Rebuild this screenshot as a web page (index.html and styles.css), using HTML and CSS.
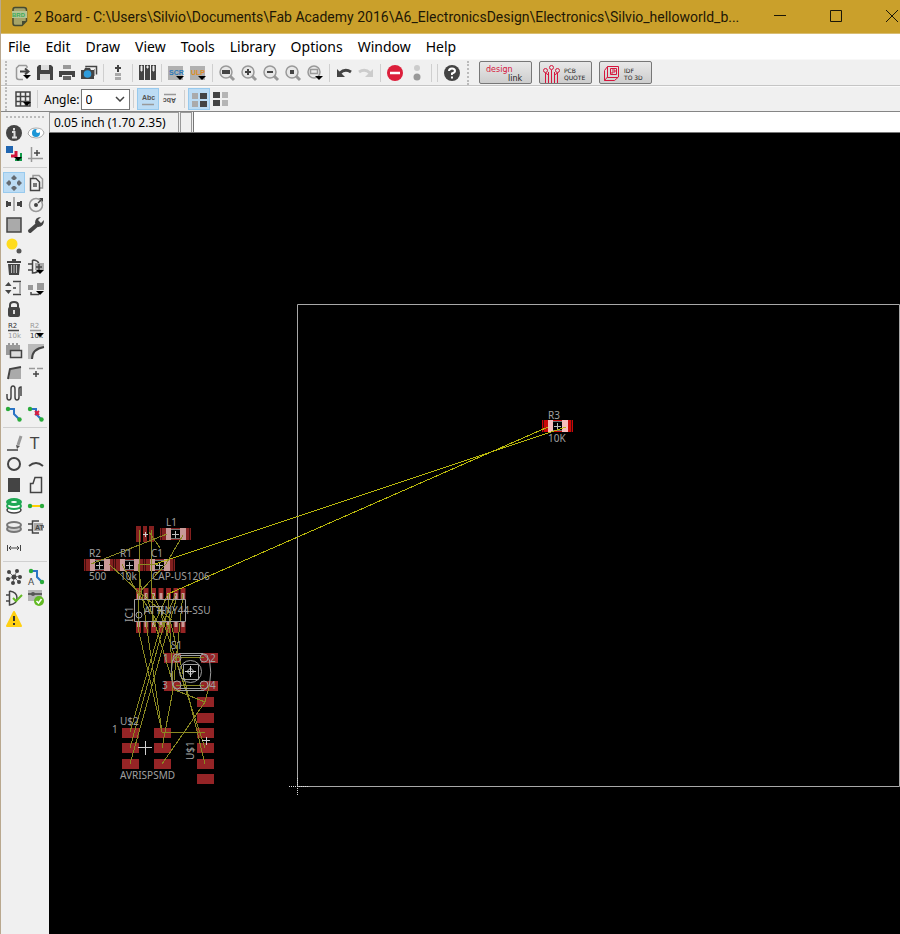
FILE: index.html
```html
<!DOCTYPE html>
<html lang="en">
<head>
<meta charset="utf-8">
<title>2 Board</title>
<link rel="stylesheet" href="styles.css">
</head>
<body>
<div class="window">
  <header class="titlebar">
    <svg class="app-icon" width="18" height="22" viewBox="0 0 18 22"><path d="M4 1.500H13Q15.500 1.500 15.500 4V15L11 19.500H4Q2 19.500 2 17V4Q2 1.500 4 1.500Z" fill="#a6a468" stroke="#454a32" stroke-width="1.500"/><path d="M11 19.500V15H15.500Z" fill="#454a32"/><rect x="1" y="5" width="15" height="7" fill="#b4c495"/><text x="1" y="11" class="brd">BRD</text></svg>
    <h1>2 Board - C:\Users\Silvio\Documents\Fab Academy 2016\A6_ElectronicsDesign\Electronics\Silvio_helloworld_b...</h1>
    <div class="window-buttons">
      <button aria-label="Minimize"><svg width="14" height="14" viewBox="0 0 14 14"><path d="M1 6.500H13" class="wb"/></svg></button>
      <button aria-label="Maximize"><svg width="14" height="14" viewBox="0 0 14 14"><path d="M1.500 1.500H12.500V12.500H1.500Z" class="wb"/></svg></button>
      <button aria-label="Close"><svg width="14" height="14" viewBox="0 0 14 14"><path d="M1 1L13 13M13 1L1 13" class="wb"/></svg></button>
    </div>
  </header>
  <nav class="menubar">
    <button>File</button><button>Edit</button><button>Draw</button><button>View</button><button>Tools</button><button>Library</button><button>Options</button><button>Window</button><button>Help</button>
  </nav>

  <div class="toolbar main-tools">
    <i class="grip"></i>
    <button aria-label="Open"><svg viewBox="0 0 18 18"><path d="M13 4V2.500L12 1.500H5L2.500 4V13Q2.500 15.500 5 15.500H9" class="g"/><path d="M6 7.500H14M11 4.500L14.500 7.500L11 10.500" class="d w2"/><path d="M9 11H17L13 15Z"/></svg></button>
    <button aria-label="Save"><svg viewBox="0 0 18 18"><path d="M3 1H15L17 3V16H1V3Z" fill="#444"/><path d="M5 1H13V6H5ZM4 10H14V16H4Z" fill="#ddd"/><path d="M1 8H17" class="d"/></svg></button>
    <button aria-label="Print"><svg viewBox="0 0 18 18"><path d="M5 2H13M5 4H13" class="g w2"/><path d="M1 7H17V13H14V11H4V13H1Z" fill="#444"/><path d="M5 12H13V16H5Z" fill="#666"/></svg></button>
    <button aria-label="Export image"><svg viewBox="0 0 18 18"><path d="M6 3.500V2.500H16.500V10.500" class="d"/><path d="M1 6H4L5 4H10L11 6H14V15H1Z" fill="#444"/><path d="M14 5H15V12H14Z" fill="#999"/><circle cx="7.500" cy="10" r="3.800" fill="#2f9ddd"/></svg></button>
    <i class="sep"></i>
    <button aria-label="Schematic"><svg viewBox="0 0 18 18"><path d="M8 1H10V3H12V5H10V8H8V5H6V3H8Z" fill="#444"/><path d="M6 9H12V12H6ZM6 13H12V16H6Z" fill="#aaa"/></svg></button>
    <i class="sep"></i>
    <button aria-label="Sheets"><svg viewBox="0 0 18 18"><path d="M1 1H6V16H1ZM7 1H12V16H7ZM13 1H18V16H13Z" fill="#444"/><path d="M3 2H4V7H3ZM9 2H10V4H9ZM15 2H16V7H15Z" fill="#eee" stroke="#eee"/></svg></button>
    <i class="sep"></i>
    <button aria-label="Script"><svg viewBox="0 0 18 18"><path d="M1 2H16V16H1Z" fill="#b0b0b0"/><text x="2" y="11" class="tag blue">SCR</text><path d="M9 12H17L13 16Z"/></svg></button>
    <button aria-label="ULP"><svg viewBox="0 0 18 18"><path d="M1 2H16V16H1Z" fill="#b0b0b0"/><text x="2" y="11" class="tag orange">ULP</text><path d="M9 12H17L13 16Z"/></svg></button>
    <i class="sep"></i>
    <button aria-label="Zoom to fit"><svg viewBox="0 0 18 18"><circle cx="8" cy="8" r="6" class="lens"/><path d="M12 12L16 16" class="handle"/><path d="M4 6H12V10H4Z" fill="#444"/></svg></button>
    <button aria-label="Zoom in"><svg viewBox="0 0 18 18"><circle cx="8" cy="8" r="6" class="lens"/><path d="M12 12L16 16" class="handle"/><path d="M5 8H11M8 5V11" class="d w2"/></svg></button>
    <button aria-label="Zoom out"><svg viewBox="0 0 18 18"><circle cx="8" cy="8" r="6" class="lens"/><path d="M12 12L16 16" class="handle"/><path d="M5 8H11" class="d w2"/></svg></button>
    <button aria-label="Redraw"><svg viewBox="0 0 18 18"><circle cx="8" cy="8" r="6" class="lens"/><path d="M12 12L16 16" class="handle"/><path d="M6 6H10V10H6Z" fill="#444"/></svg></button>
    <button aria-label="Zoom select"><svg viewBox="0 0 18 18"><circle cx="8" cy="8" r="6" class="lens"/><path d="M4.500 5.500H11.500V9.500H4.500Z" class="g"/><path d="M9 12H17L13 16Z"/></svg></button>
    <i class="sep"></i>
    <button aria-label="Undo"><svg viewBox="0 0 18 18"><path d="M5 9Q10 4 16 8" class="d w3"/><path d="M2 5V13H10Z" fill="#444"/></svg></button>
    <button aria-label="Redo"><svg viewBox="0 0 18 18"><path d="M2 8Q8 4 13 9" fill="none" stroke="#ccc" stroke-width="3"/><path d="M16 5V13H8Z" fill="#ccc"/></svg></button>
    <i class="sep"></i>
    <button aria-label="Stop"><svg viewBox="0 0 18 18"><circle cx="9" cy="9" r="8" fill="#dc1f3b"/><path d="M4 9H14" stroke="#fff" stroke-width="2.500"/></svg></button>
    <button aria-label="Go"><svg viewBox="0 0 18 18"><circle cx="9" cy="4" r="3" fill="#ccc"/><circle cx="9" cy="13" r="3.500" fill="#999"/></svg></button>
    <i class="sep double"></i>
    <button aria-label="Help"><svg viewBox="0 0 18 18"><circle cx="9" cy="9" r="8" fill="#444"/><path d="M6 7Q6 4.500 9 4.500T12 7Q12 8.500 9 9.500V11M9 12.500V14.500" fill="none" stroke="#fff" stroke-width="2"/></svg></button>
    <i class="grip links"></i>
    <button class="link-button" aria-label="design link"><svg width="51" height="20" viewBox="0 0 51 20"><text x="6" y="9" class="design">design</text><text x="28" y="18" class="link">link</text></svg></button>
    <button class="link-button" aria-label="PCB quote"><svg width="51" height="20" viewBox="0 0 51 20"><path d="M5.500 10V20M8.500 9V20M11.500 7V20M14.500 9V20M17.500 10V20M5.500 10L8.500 12M17.500 10L14.500 12" class="r"/><circle cx="5.500" cy="7.500" r="2" class="r"/><circle cx="11.500" cy="4.500" r="2" class="r"/><circle cx="17.500" cy="7.500" r="2" class="r"/><text x="24" y="10" class="mini">PCB</text><text x="24" y="17" class="mini">QUOTE</text></svg></button>
    <button class="link-button" aria-label="IDF to 3D"><svg width="51" height="20" viewBox="0 0 51 20"><path d="M7.500 3.500H18.500V14L14.500 17.500H4.500V7.500ZM7.500 3.500V14.500H18M4.500 17.500L7.500 14M10.500 5.500H16.500V11.500H10.500ZM12 7H15V9H12V11" class="r"/><text x="24" y="10" class="mini">IDF</text><text x="24" y="17" class="mini">TO 3D</text></svg></button>
  </div>

  <div class="toolbar options">
    <i class="grip"></i>
    <button aria-label="Grid"><svg viewBox="0 0 18 18"><path d="M2 2H16V16H2ZM6.500 2V16M11.500 2V16M2 6.500H16M2 11.500H16" class="d"/><path d="M9 12H17L13 16Z"/></svg></button>
    <i class="sep"></i>
    <label for="angle">Angle:</label>
    <span class="select"><select id="angle"><option>0</option><option>90</option></select><svg width="10" height="6" viewBox="0 0 10 6"><path d="M1 1L5 5L9 1" class="d"/></svg></span>
    <i class="sep"></i>
    <button class="on" aria-label="Normal text"><svg viewBox="0 0 18 18"><text x="3" y="10" class="abc">Abc</text><path d="M3 14.500H15" class="g"/></svg></button>
    <button aria-label="Rotated text"><svg viewBox="0 0 18 18"><path d="M3 4.500H15" class="g"/><text x="-15" y="-8" transform="rotate(180)" class="abc">Abc</text></svg></button>
    <i class="sep"></i>
    <button class="on" aria-label="Right layers"><svg viewBox="0 0 18 18"><path d="M2 3H8V9H2ZM2 11H8V17H2Z" fill="#aaa"/><path d="M10 3H17V9H10ZM10 11H17V17H10Z" fill="#444"/></svg></button>
    <button aria-label="Left layers"><svg viewBox="0 0 18 18"><path d="M1 2H8V8H1ZM1 10H8V16H1Z" fill="#444"/><path d="M10 2H16V8H10ZM10 10H16V16H10Z" fill="#b5b5b5"/></svg></button>
  </div>

  <main class="workspace">
    <aside class="sidebar">
      <i class="grip-row"></i>
      <div class="group">
        <button aria-label="Info"><svg viewBox="0 0 18 18"><circle cx="9" cy="9" r="8" fill="#444"/><path d="M9 4V6.500M7 8H9.500V13M7 13.500H12" fill="none" stroke="#ddd" stroke-width="2"/></svg></button>
        <button aria-label="Show"><svg viewBox="0 0 18 18"><path d="M1 10Q2 4 9 4Q16 4 17 9Q15 14 9 14Q3 14 1 10Z" fill="#fff" stroke="#aaa"/><circle cx="9" cy="9" r="4" fill="#1d96d6"/><circle cx="11" cy="7" r="2" fill="#fff"/></svg></button>
        <button aria-label="Layers"><svg viewBox="0 0 18 18"><path d="M1 1H8V8H1Z" fill="#2065b0"/><path d="M6 11H11V6" fill="none" stroke="#d4143f" stroke-width="3"/><path d="M10 15H16V8" fill="none" stroke="#119b49" stroke-width="2"/><path d="M9 12H17L13 16Z"/></svg></button>
        <button aria-label="Mark"><svg viewBox="0 0 18 18"><path d="M4.500 2V17M1 13.500H16" class="g"/><path d="M7 8H13M10 5V11" class="d"/></svg></button>
      </div>
      <div class="group">
        <button class="on" aria-label="Move"><svg viewBox="0 0 18 18"><path d="M9 1L12 4L10 6H8L6 4ZM9 17L12 14L10 12H8L6 14ZM1 9L4 6L6 8V10L4 12ZM17 9L14 6L12 8V10L14 12Z" fill="#646b72"/></svg></button>
        <button aria-label="Copy"><svg viewBox="0 0 18 18"><path d="M6 4V1.500H12L15.500 5V14H13" class="g"/><path d="M3.500 4.500H9L12.500 8V16.500H3.500Z" class="d"/><path d="M6 9H10V13H6Z" fill="#777"/></svg></button>
        <button aria-label="Mirror"><svg viewBox="0 0 18 18"><path d="M9 2V16" class="g"/><path d="M1 6H3V7H6V11H3V12H1ZM17 6H15V7H12V11H15V12H17Z" fill="#444"/></svg></button>
        <button aria-label="Rotate"><svg viewBox="0 0 18 18"><circle cx="9" cy="10" r="6.500" class="g"/><circle cx="9" cy="10" r="2" fill="#444"/><path d="M11 8L14 5" class="d"/><path d="M12 3H16V7Z" fill="#444"/></svg></button>
        <button aria-label="Group"><svg viewBox="0 0 18 18"><path d="M2 2H16V16H2Z" fill="#aaa" stroke="#444" stroke-width="1.500"/></svg></button>
        <button aria-label="Change"><svg viewBox="0 0 18 18"><path d="M3 15L11 8" fill="none" stroke="#444" stroke-width="4" stroke-linecap="round"/><path d="M8 7Q8 1 14 1L11 4L14 7L17 4Q17 11 11 11Z" fill="#444"/></svg></button>
        <button aria-label="Paste"><svg viewBox="0 0 18 18"><circle cx="7" cy="7" r="5.500" fill="#ffdc1d"/><circle cx="14" cy="14" r="2.500" fill="#555"/></svg></button><i></i>
        <button aria-label="Delete"><svg viewBox="0 0 18 18"><path d="M2 4H16M7 2H11" class="d w2"/><path d="M3 6H15L14 17H4Z" fill="#444"/><path d="M6.500 7V15M9 7V15M11.500 7V15" stroke="#bbb"/></svg></button>
        <button aria-label="Add"><svg viewBox="0 0 18 18"><path d="M1 6H5M1 12H5M5.500 2V15Q11 15 12 11M5.500 2Q11 2 12 6" class="d"/><path d="M8 5H17V12H8Z" fill="#aaa"/><path d="M9 9H15M12 6V12" class="d"/><path d="M9 12H17L13 16Z"/></svg></button>
        <button aria-label="Pinswap"><svg viewBox="0 0 18 18"><path d="M3.500 3L6.500 7H0ZM3.500 15L6.500 11H0Z" fill="#444"/><path d="M8 9H11M8 2.500H16M8 15.500H16" class="d"/><path d="M14 3H16V15H14Z" fill="#aaa"/></svg></button>
        <button aria-label="Replace"><svg viewBox="0 0 18 18"><path d="M1 6H6V11H1ZM10 4H17V11H10Z" fill="#999"/><path d="M4 13V15.500H12" class="d"/><path d="M9 12H17L13 16Z"/></svg></button>
        <button aria-label="Lock"><svg viewBox="0 0 18 18"><path d="M5 8V5Q5 2 9 2T13 5V8" class="d w2"/><rect x="3" y="7" width="12" height="10" rx="2" fill="#444"/><path d="M9 10V14" stroke="#ddd" stroke-width="2"/></svg></button><i></i>
        <button aria-label="Name"><svg viewBox="0 0 18 18"><text x="3" y="7" class="name">R2</text><path d="M3 9.500H14" class="d"/><text x="3" y="17" class="name pale">10k</text></svg></button>
        <button aria-label="Value"><svg viewBox="0 0 18 18"><text x="3" y="7" class="name pale">R2</text><path d="M3 9.500H14" class="g"/><text x="3" y="17" class="name">10k</text><path d="M9 12H17L13 16Z"/></svg></button>
        <button aria-label="Smash"><svg viewBox="0 0 18 18"><path d="M1 3H3V1H5V3H7V1H9V3H11V1H13V3H15V13H13V15H11V13H1Z" fill="#999"/><path d="M5.500 8.500H16.500V15.500H5.500Z" fill="#ddd" stroke="#444" stroke-width="1.500"/></svg></button>
        <button aria-label="Miter"><svg viewBox="0 0 18 18"><path d="M1 2H17V5Q7 5 5 17H1Z" fill="#bbb"/><path d="M5 17Q5 7 17 5" class="d w2"/></svg></button>
        <button aria-label="Split"><svg viewBox="0 0 18 18"><path d="M4 16L6 6L16 4V16Z" fill="#aaa"/><path d="M3 16L5 6L16 4" class="d w2"/></svg></button>
        <button aria-label="Optimize"><svg viewBox="0 0 18 18"><path d="M2 5.500H8M10 5.500H16" class="g"/><path d="M6 11H12M9 8V14" class="d"/></svg></button>
        <button aria-label="Meander"><svg viewBox="0 0 18 18"><path d="M2 10V13Q2 16 4 16T6 13V5Q6 2 8 2T10 5V13Q10 16 12 16T14 13V5Q14 3 16 3V12" class="d"/></svg></button><i></i>
        <button aria-label="Route"><svg viewBox="0 0 18 18"><path d="M2 4H9V9L15 15" class="wire"/><circle cx="3" cy="4" r="2.200" class="node"/><circle cx="14.500" cy="14.500" r="2.200" class="node"/></svg></button>
        <button aria-label="Ripup"><svg viewBox="0 0 18 18"><path d="M2 4H9V9L15 15" class="wire"/><circle cx="3" cy="4" r="2.200" class="node"/><circle cx="14.500" cy="14.500" r="2.200" class="node"/><path d="M8 6L12 10M12 6L8 10" stroke="#d91c3f" stroke-width="2"/></svg></button>
      </div>
      <div class="group">
        <button aria-label="Wire"><svg viewBox="0 0 18 18"><path d="M2 16H13" class="d"/><path d="M13 11L16 2" stroke="#999" stroke-width="3"/><path d="M11 11L15 12L12 15Z" fill="#555"/></svg></button>
        <button aria-label="Text"><svg viewBox="0 0 18 18"><text x="3" y="15" class="tee">T</text></svg></button>
        <button aria-label="Circle"><svg viewBox="0 0 18 18"><circle cx="9" cy="9" r="6" class="d w2"/></svg></button>
        <button aria-label="Arc"><svg viewBox="0 0 18 18"><path d="M2 11Q9 5 16 11" class="d w2"/></svg></button>
        <button aria-label="Rectangle"><svg viewBox="0 0 18 18"><path d="M3 2H15V16H3Z" fill="#444"/></svg></button>
        <button aria-label="Polygon"><svg viewBox="0 0 18 18"><path d="M8 1.500H14.500V16.500H3.500V7.500H6Z" class="d"/></svg></button>
        <button aria-label="Via"><svg viewBox="0 0 18 18"><ellipse cx="9" cy="13" rx="7" ry="3" fill="#fff" stroke="#444" stroke-width="1.500"/><ellipse cx="9" cy="9" rx="7" ry="3" fill="#fff" stroke="#1fa854" stroke-width="2"/><ellipse cx="9" cy="5" rx="8" ry="4" fill="#1fa854"/><ellipse cx="9" cy="5" rx="3" ry="1" fill="#fff"/></svg></button>
        <button aria-label="Signal"><svg viewBox="0 0 18 18"><path d="M3 9H15" stroke="#ffcf00" stroke-width="2"/><circle cx="3" cy="9" r="2.200" class="node"/><circle cx="15" cy="9" r="2.200" class="node"/></svg></button>
        <button aria-label="Hole"><svg viewBox="0 0 18 18"><ellipse cx="9" cy="11" rx="7" ry="3" fill="#ccc" stroke="#777" stroke-width="2"/><ellipse cx="9" cy="7" rx="7" ry="3" fill="#eee" stroke="#777" stroke-width="2"/></svg></button>
        <button aria-label="Attribute"><svg viewBox="0 0 18 18"><path d="M1 6H5M1 12H5M12 3H5.500V15H12M14 9H17" class="d"/><path d="M7 5H16V13H7Z" fill="#aaa"/><text x="8" y="12" class="tag">AT</text></svg></button>
        <button aria-label="Dimension"><svg viewBox="0 0 18 18"><path d="M2.500 6V12M15.500 6V12M4 9H14M6 7L4 9L6 11M12 7L14 9L12 11" class="d thin"/></svg></button><i></i>
      </div>
      <div class="group">
        <button aria-label="Ratsnest"><svg viewBox="0 0 18 18"><path d="M9 9L4 4M9 9L12 3M9 9L15 8M9 9L14 14M9 9L8 15M9 9L3 11" stroke="#777"/><g fill="#444"><circle cx="9" cy="9" r="2.500"/><circle cx="4" cy="4" r="2"/><circle cx="12" cy="3" r="2"/><circle cx="15" cy="9" r="2"/><circle cx="14" cy="14" r="2"/><circle cx="8" cy="15" r="2"/><circle cx="3" cy="11" r="2"/></g></svg></button>
        <button aria-label="Autorouter"><svg viewBox="0 0 18 18"><path d="M3 3H10V9L15 14" class="wire"/><circle cx="4" cy="3" r="2.200" class="node"/><circle cx="15" cy="14" r="2.200" class="node"/><text x="1" y="17" class="letter">A</text></svg></button>
        <button aria-label="ERC"><svg viewBox="0 0 18 18"><path d="M1 6H4M1 12H4M4.500 2V16Q12 15 12 9Q12 3 4.500 2" class="d"/><path d="M8 9L11 12L17 6" fill="none" stroke="#63ba24" stroke-width="2"/></svg></button>
        <button aria-label="DRC"><svg viewBox="0 0 18 18"><path d="M1 1H15V12H1Z" fill="#b5b5b5"/><path d="M1 5H15" class="d"/><circle cx="6" cy="5" r="2" fill="#555"/><circle cx="12" cy="12" r="5" fill="#63ba24"/><path d="M9.500 12L11.500 14L14.500 10" fill="none" stroke="#fff" stroke-width="1.500"/></svg></button>
        <button aria-label="Errors"><svg viewBox="0 0 18 18"><path d="M9 2L16 16H2Z" fill="#ffd012" stroke="#ffd012" stroke-width="2" stroke-linejoin="round"/><path d="M9 6V11M9 13V15" stroke="#333" stroke-width="2"/></svg></button>
      </div>
    </aside>

    <section class="editor">
      <div class="command-row">
        <output class="coords">0.05 inch (1.70 2.35)</output>
        <span class="spacer-cell"></span>
        <input type="text" aria-label="Command line">
      </div>
      <svg class="board" role="img" aria-label="Board layout">
        <defs>
          <g id="chip">
            <path d="M0 0H31V12H0Z" fill="currentColor"/><path d="M1.500 0V12M29.500 0V12" stroke="#400c0c"/>
            <path d="M6 0H11V12H6ZM20 0H26V12H20Z" class="metal"/>
            <path d="M11 1H20V11H11Z"/><path d="M11 1.500H20M11 10.500H20" stroke="#777"/>
            <path d="M12 6.500H19M15.500 3V10" stroke="#bbb"/>
          </g>
          <path id="smd" d="M0 0H17V10H0Z" fill="#952426"/>
        </defs>
        <g transform="translate(-49 -133)">
          <path d="M297.500 304.500H899.500V786.500H297.500Z" class="outline"/>
          <path d="M289 786.500H308M297.500 778V796" class="origin"/>

          <g class="dim">
            <use href="#chip" x="160" y="528"/><use href="#chip" x="84" y="559"/><use href="#chip" x="114" y="559"/><use href="#chip" x="144" y="559"/>
            <path d="M136 526H141V542H136ZM143 526H147V542H143ZM149 526H154V542H149Z" fill="currentColor"/>
          </g>
          <use href="#chip" x="542" y="420" class="bright"/>
          <path d="M143 534.500H148M145.500 532V537" class="cross"/>

          <path d="M138.500 588V600M146 588V600M153.500 588V600M161 588V600M168.500 588V600M176 588V600M183 588V600M138.500 621V633M146 621V633M153.500 621V633M161 621V633M168.500 621V633M176 621V633M183 621V633" class="pins"/>
          <path d="M138.500 593V599M146 593V599M153.500 593V599M161 593V599M168.500 593V599M176 593V599M183 593V599M138.500 622V627M146 622V627M153.500 622V627M161 622V627M168.500 622V627M176 622V627M183 622V627" class="pin-metal"/>

          <use href="#smd" x="164" y="653"/><use href="#smd" x="201" y="653"/><use href="#smd" x="164" y="681"/><use href="#smd" x="201" y="681"/>
          <use href="#smd" x="197" y="697"/><use href="#smd" x="197" y="713"/><use href="#smd" x="197" y="728"/><use href="#smd" x="197" y="743"/><use href="#smd" x="197" y="759"/><use href="#smd" x="197" y="774"/>
          <use href="#smd" x="122" y="728"/><use href="#smd" x="122" y="743"/><use href="#smd" x="122" y="759"/>
          <use href="#smd" x="154" y="728"/><use href="#smd" x="154" y="743"/><use href="#smd" x="154" y="759"/>

          <g class="rats">
            <path class="lit" d="M152 565L566 427M168 594L548 427"/>
            <path d="M91 564L167 534M183 535L166 564L138 594M139 530V594M151 530V594M149 532L160 548M109 564L139 592L172 620M122 564L138 594M138 564.500H158M138 565L146 622"/>
            <path d="M139 594L161 627M152 594L153 623M153 594L168 627M168 594L153 627M176 594L161 627M138 594V628"/>
            <path d="M138 628L162 732M146 622L162 732M161 625L130 732M168 610L130 748M176 600L130 764M168 594L173 690L162 748M161 615L205 748M170 620L205 764M146 594L175 690L205 702L162 764M183 594L174 680M210 683L205 702M162 732.500H205M176 657.500H204M176 685.500H204"/>
          </g>

          <path d="M134.500 599.500H185.500V621.500H134.500Z" class="silk"/><circle cx="139" cy="615" r="3" class="silk"/><path d="M157 610.500H165M161.500 606V615" class="silk"/>
          <g class="silk">
            <path d="M179 653.500H203L209.500 660Q212 672 209.500 685L204 690.500H178L172.500 685Q170 672 172.500 660L179 653.500M180 655.500H201M180 688.500H201M183.500 664.500H198.500V679.500H183.500Z"/>
            <circle cx="190.500" cy="671.500" r="11"/><circle cx="177" cy="658" r="4"/><circle cx="204" cy="658" r="4"/><circle cx="177" cy="685" r="4"/><circle cx="204" cy="685" r="4"/>
          </g>
          <path d="M185 671.500H196M190.500 666V677M187 671.500L190.500 668L194 671.500L190.500 675Z" class="cross"/>
          <path d="M138 747.500H152M145.500 741V755M202 740.500H210M206.500 737V745" class="cross"/>

          <g class="labels">
            <text x="548" y="419">R3</text><text x="548" y="442">10K</text><text x="166" y="526">L1</text>
            <text x="89" y="557">R2</text><text x="120" y="557">R1</text><text x="151" y="557">C1</text>
            <text x="89" y="580">500</text><text x="120" y="580">10k</text><text x="152" y="580">CAP-US1206</text>
            <text x="144" y="614">ATTINY44-SSU</text><text transform="translate(133 622) rotate(-90)">IC1</text>
            <text x="171" y="649">S1</text><text x="163" y="662">1</text><text x="210" y="662">2</text><text x="162" y="689">3</text><text x="210" y="689">4</text>
            <text x="120" y="725">U$2</text><text x="112" y="733">1</text><text transform="translate(194 760) rotate(-90)">U$1</text><text x="120" y="779">AVRISPSMD</text>
          </g>
        </g>
      </svg>
    </section>
  </main>
</div>
</body>
</html>
```
FILE: styles.css
```css
* { box-sizing: border-box; }
body { margin: 0; font-family: "Noto Sans", sans-serif; color: #000; }
button { border: 0; padding: 0; margin: 0; background: none; font: inherit; color: inherit; }
svg { display: block; flex: none; }

.window { display: flex; flex-direction: column; min-height: 100vh; border-left: 1px solid #b9a88e; background: #f0f0f0; }

.titlebar { display: flex; align-items: center; height: 34px; padding-left: 10px; gap: 5px; background: #caa02b; border-bottom: 1px solid #d9bd72; overflow: hidden; }
.titlebar h1 { flex: 1; min-width: 0; margin: 0; font: 400 14px/20px Roboto, sans-serif; color: #1d1706; white-space: nowrap; overflow: hidden; text-overflow: ellipsis; }
.window-buttons { display: flex; gap: 42px; margin-right: 1px; padding-bottom: 2px; }
.wb { fill: none; stroke: #1b1607; }
.brd { font: 700 6px "Liberation Sans", sans-serif; fill: #3eaa56; }

.menubar { display: flex; gap: 15px; height: 25px; padding-left: 7px; background: #fff; font-size: 14px; line-height: 25px; }

.toolbar { display: flex; align-items: center; border-bottom: 1px solid #c5c5c5; }
.main-tools { height: 27px; border-top: 1px solid #f8f8f8; }
.options { height: 26px; border-top: 1px solid #fafafa; border-bottom: 1px solid #858585; }
.toolbar > button { display: flex; align-items: center; justify-content: center; flex: none; width: 22px; height: 22px; }
.toolbar > button > svg, .group svg { width: 18px; height: 18px; }
.grip { flex: none; width: 3px; height: 24px; margin: 0 4px; border-left: 2px dotted #bbb; }
.grip.links { margin: 0 9px 0 4px; }
.sep { flex: none; width: 1px; height: 18px; margin: 0 3px; background: #cfcfcf; }
.sep.double { width: 7px; background: none; border: solid #cfcfcf; border-width: 0 1px; }
.on { background: #bcdcf4; outline: 1px solid #98caee; outline-offset: -1px; }
.toolbar > .link-button { width: 53px; height: 23px; margin-right: 7px; border: 1px solid #777; border-radius: 2px; background: linear-gradient(#e8e8e8, #cdcdcd); }
.toolbar > .link-button > svg { width: 51px; height: 20px; }

.d { fill: none; stroke: #444; stroke-width: 1.5; }
.g { fill: none; stroke: #999; stroke-width: 1.5; }
.r { fill: none; stroke: #d6163d; }
.w2 { stroke-width: 2; }
.w3 { stroke-width: 3; }
.thin { stroke-width: 1; }
.lens { fill: #e8e8e8; stroke: #999; stroke-width: 1.5; }
.handle { stroke: #999; stroke-width: 3; }
.wire { fill: none; stroke: #2a73c5; stroke-width: 2; }
.node { fill: #2aab3b; }
.tag { font: 700 7px "Liberation Sans", sans-serif; fill: #444; }
.blue { fill: #2c78b8; }
.orange { fill: #df8c25; }
.abc { font: 700 7px "Liberation Sans", sans-serif; fill: #555; }
.name { font: 7px "DejaVu Sans", sans-serif; fill: #333; }
.pale { fill: #999; }
.tee { font: 15px "DejaVu Sans", sans-serif; fill: #444; }
.letter { font: 9px "DejaVu Sans", sans-serif; fill: #444; }
.design { font: 8px "DejaVu Sans", sans-serif; fill: #d6163d; }
.link { font: 8px "DejaVu Sans", sans-serif; fill: #222; }
.mini { font: 6px "DejaVu Sans", sans-serif; fill: #222; }

.options label { font-size: 12px; padding-left: 3px; }
.select { display: flex; align-items: center; width: 49px; height: 21px; margin-left: 1px; border: 1px solid #777; background: #fff; padding-right: 4px; }
.select select { flex: 1; min-width: 0; height: 19px; padding: 0 0 0 4px; border: 0; background: none; appearance: none; font: 12px "Noto Sans", sans-serif; color: #000; }

.workspace { display: flex; flex: 1; }
.sidebar { flex: none; width: 48px; padding: 4px 2px 0; }
.grip-row { display: block; height: 6px; margin: 0 3px; border-top: 2px dotted #bbb; }
.group { display: grid; grid-template-columns: 22px 22px; grid-auto-rows: 21px; padding-bottom: 3px; }
.group + .group { padding-top: 4px; border-top: 1px solid #d0d0d0; }
.group button { display: flex; align-items: center; justify-content: center; }

.editor { display: flex; flex-direction: column; flex: 1; min-width: 0; }
.command-row { display: flex; height: 21px; gap: 1px; border-bottom: 1px solid #777; }
.coords { width: 130px; padding-left: 4px; border: 1px solid #999; border-bottom: 0; font-size: 12px; line-height: 19px; white-space: nowrap; }
.spacer-cell { width: 12px; border: 1px solid #999; border-bottom: 0; }
.command-row input { flex: 1; min-width: 0; border: 0; border-left: 1px solid #777; padding: 0 4px; background: #fff; }
.board { flex: 1; width: 100%; min-height: 660px; background: #000; }

.outline { fill: none; stroke: #a8a8a8; }
.origin { fill: none; stroke: #ddd; stroke-dasharray: 1 1; }
.dim { color: #84201f; }
.bright { color: #cb0707; --pad: #f6bcbc; }
.metal { fill: var(--pad, #c99a98); }
.pins { stroke: #962424; stroke-width: 5; }
.pin-metal { stroke: #c79b98; stroke-width: 3; }
.silk { fill: none; stroke: #a0a0a0; }
.cross { fill: none; stroke: #d0d0d0; }
.rats { fill: none; stroke: #8a8922; shape-rendering: crispEdges; }
.rats .lit { stroke: #b9b80c; }
.labels { font: 10px "Noto Sans", sans-serif; fill: #a0a0a0; }
```
